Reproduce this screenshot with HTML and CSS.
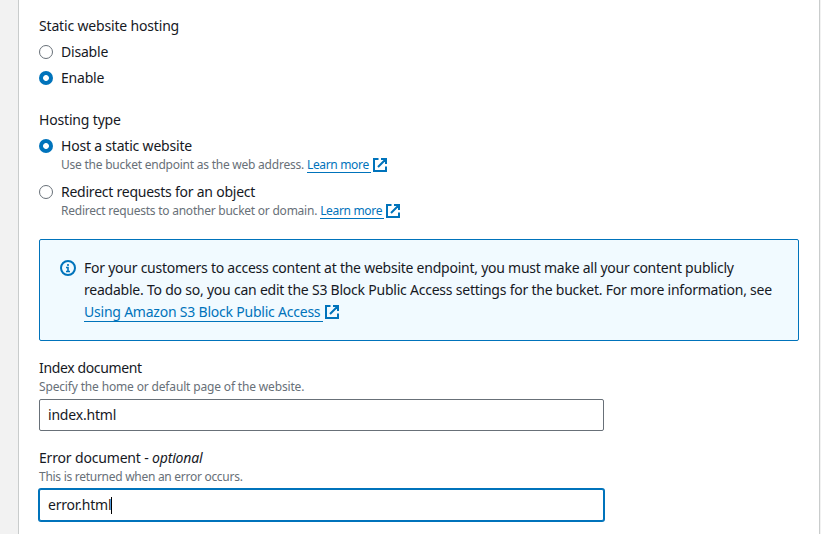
FILE: index.html
```html
<!DOCTYPE html>
<html lang="en">
<head>
<meta charset="utf-8">
<title>Static website hosting</title>
<link rel="stylesheet" href="styles.css">
</head>
<body>
<svg class="defs" width="0" height="0">
  <symbol id="external" viewBox="0 0 16 16"><path d="M6.5 2H2v12h12V9.5M9 2H14v5M14 2L6 10"/></symbol>
</svg>
<main class="panel">
  <section class="group">
    <div class="label"><span class="t1">Static website hosting</span></div>
    <label class="option"><span class="radio"></span><span class="t2">Disable</span></label>
    <label class="option"><span class="radio on"></span><span class="t3">Enable</span></label>
  </section>
  <section class="group types">
    <div class="label"><span class="t4">Hosting type</span></div>
    <label class="option"><span class="radio on"></span><span class="t5">Host a static website</span></label>
    <div class="hint indent"><span class="h1">Use the bucket endpoint as the web address.</span><a class="link l1"><span>Learn more</span></a><svg class="ext"><use href="#external"/></svg></div>
    <label class="option second"><span class="radio"></span><span class="t6">Redirect requests for an object</span></label>
    <div class="hint indent"><span class="h2">Redirect requests to another bucket or domain.</span><a class="link l1"><span>Learn more</span></a><svg class="ext"><use href="#external"/></svg></div>
  </section>
  <section class="alert">
    <svg class="info" viewBox="0 0 16 16"><circle cx="8" cy="8" r="7"/><path d="M8 4v2M6 7.5h2V11M6 11.5h4"/></svg>
    <div class="message">
      <div><span class="a1">For your customers to access content at the website endpoint, you must make all your content publicly</span></div>
      <div><span class="a2">readable. To do so, you can edit the S3 Block Public Access settings for the bucket. For more information, see</span></div>
      <div class="linkrow"><a class="link big"><span class="a3">Using Amazon S3 Block Public Access</span></a><svg class="ext"><use href="#external"/></svg></div>
    </div>
  </section>
  <section class="field">
    <div class="label"><span class="t7">Index document</span></div>
    <div class="hint"><span class="h3">Specify the home or default page of the website.</span></div>
    <div class="input"><span class="t8">index.html</span></div>
  </section>
  <section class="field">
    <div class="label"><span class="t9">Error document - <em>optional</em></span></div>
    <div class="hint"><span class="h4">This is returned when an error occurs.</span></div>
    <div class="input focus"><span class="t10">error.html</span><i class="caret"></i></div>
  </section>
</main>
</body>
</html>
```
FILE: styles.css
```css
* { box-sizing: border-box; }
body { margin: 0; height: 534px; overflow: hidden; background: #f2f2f2; color: #16191f; font: 14px/22px "Noto Sans", sans-serif; }
.defs { position: absolute; }
.panel { margin-left: 18px; width: 802px; height: 534px; padding: 15px 20px 0; background: #fff; border-left: 1px solid #c9cccc; border-right: 1px solid #c9cccc; overflow: hidden; white-space: nowrap; }
.option { display: flex; align-items: center; gap: 8px; height: 22px; margin-top: 4px; }
.option.second { margin-top: 8px; }
.radio { width: 14px; height: 14px; border: 1px solid #687078; border-radius: 50%; background: #fff; }
.radio.on { border: 0; background: radial-gradient(circle, #fff 2.5px, #0073bb 3.3px); }
.types { margin-top: 20px; }
.hint { display: flex; align-items: center; height: 16px; font-size: 12px; line-height: 16px; color: #687078; }
.indent { padding-left: 22px; }
.link { display: block; height: 16px; color: #0073bb; border-bottom: 1px solid #0073bb; margin-left: 3px; padding-right: 2px; flex: none; }
.ext { width: 16px; height: 16px; margin-left: 1px; fill: none; stroke: #0073bb; stroke-width: 2; flex: none; }
.alert { display: flex; gap: 8px; margin-top: 20px; height: 102px; padding: 17px 20px; border: 1px solid #0073bb; border-radius: 2px; background: #f1faff; }
.info { width: 16px; height: 16px; margin-top: 3px; fill: none; stroke: #0073bb; stroke-width: 2; flex: none; }
.info path { stroke-width: 1.6; }
.linkrow { display: flex; align-items: center; height: 22px; }
.link.big { height: 20px; line-height: 20px; margin-left: 0; padding-right: 3px; }
.field { margin-top: 16px; }
.input { display: flex; align-items: center; width: 565px; height: 32px; margin-top: 4px; padding: 0 8px; border: 1px solid #687078; border-radius: 2px; background: #fff; }
.focus { border-color: #0073bb; box-shadow: 0 0 0 1px #0073bb; }
.caret { width: 1px; height: 17px; background: #000; }

/* Tracking per text run */
.t1, .t4, .t9 { letter-spacing: -0.17px; }
.t2, .t3, .t5, .t8, .t10 { letter-spacing: -0.2px; }
.t6 { letter-spacing: -0.24px; }
.t7 { letter-spacing: -0.37px; }
.h1, .h2 { letter-spacing: -0.235px; }
.h3 { letter-spacing: -0.16px; }
.h4 { letter-spacing: -0.28px; }
.l1 { letter-spacing: -0.33px; }
.a1 { letter-spacing: -0.244px; }
.a2 { letter-spacing: -0.225px; }
.a3 { letter-spacing: -0.22px; }
```
